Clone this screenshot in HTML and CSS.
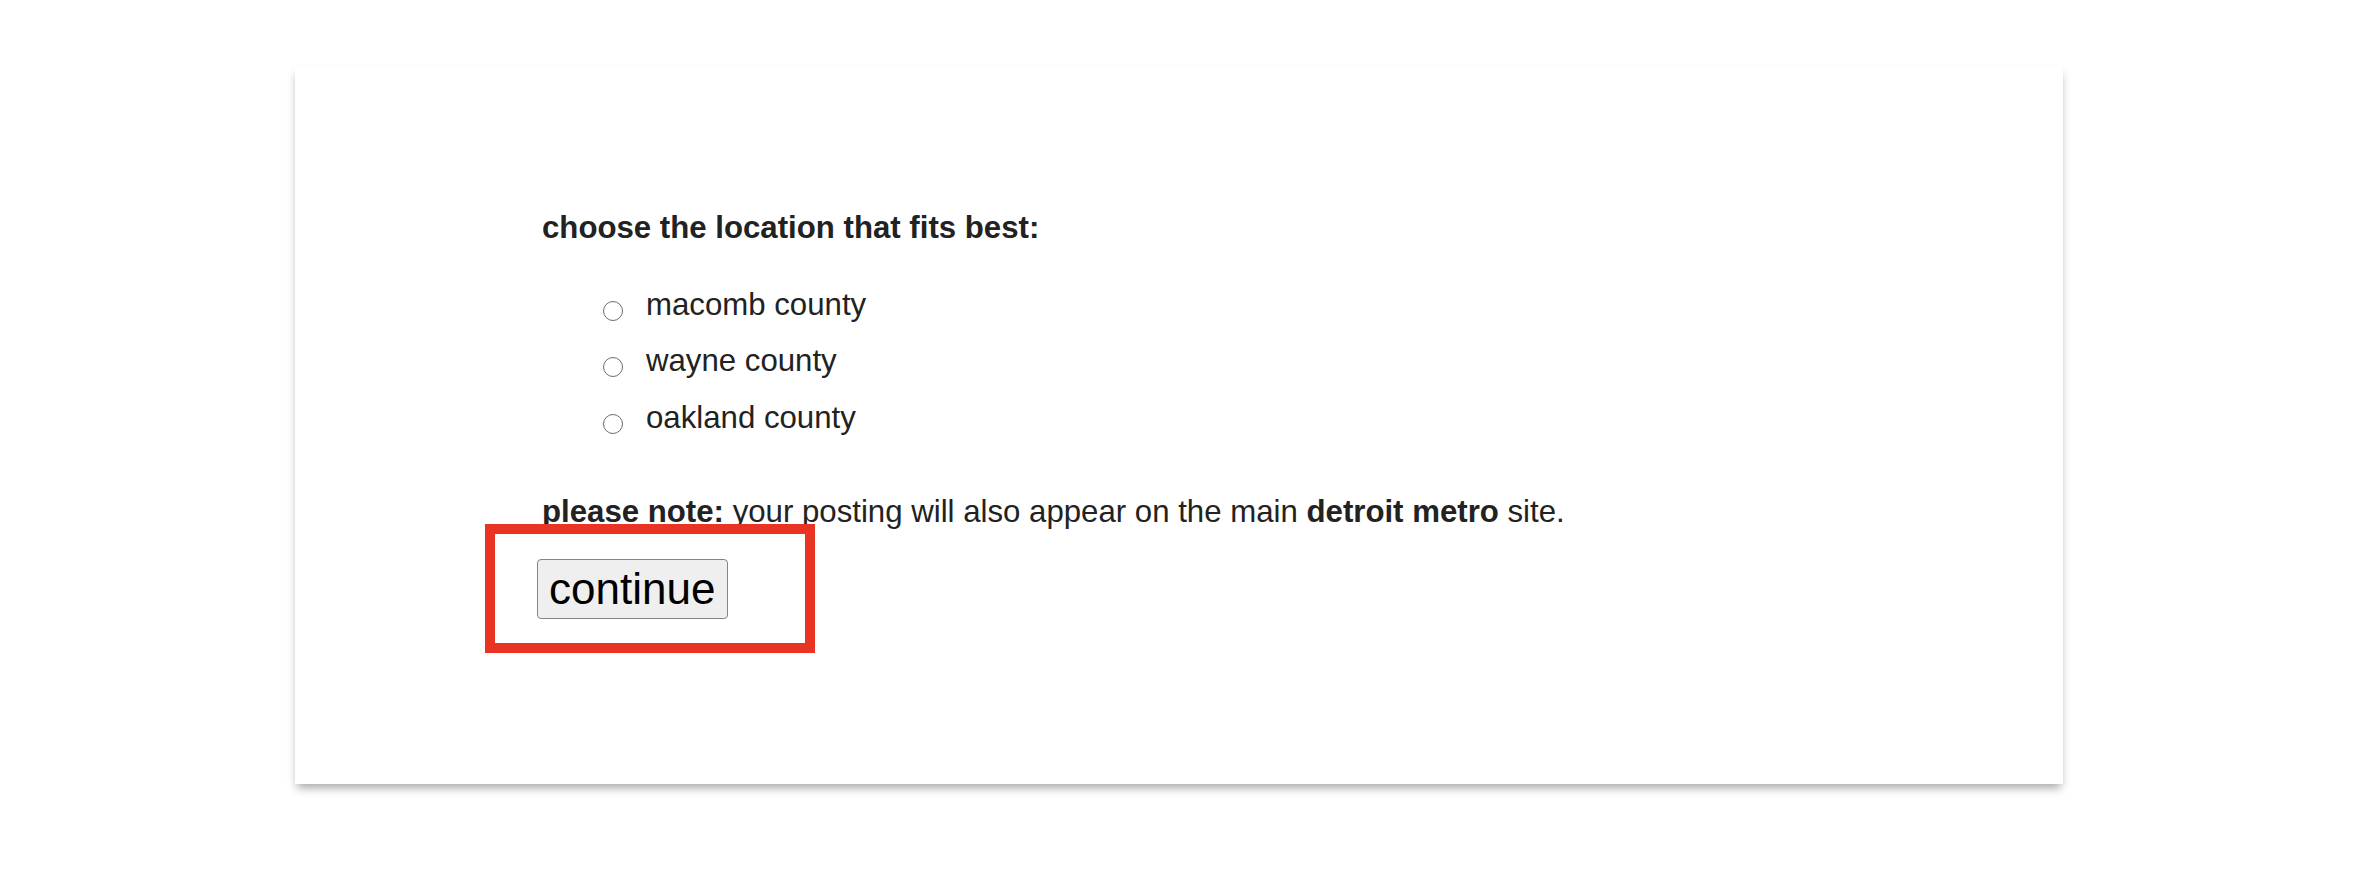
FILE: index.html
```html
<!DOCTYPE html>
<html lang="en">
<head>
<meta charset="utf-8">
<title>choose location</title>
<link rel="stylesheet" href="styles.css">
</head>
<body>
<div class="page">
  <div class="card">
    <form class="form">
      <p class="heading">choose the location that fits best:</p>
      <div class="options">
        <label class="option"><input class="radio" type="radio" name="loc"><span class="opt-text">macomb county</span></label>
        <label class="option"><input class="radio" type="radio" name="loc"><span class="opt-text">wayne county</span></label>
        <label class="option"><input class="radio" type="radio" name="loc"><span class="opt-text">oakland county</span></label>
      </div>
      <p class="note"><b>please note:</b> your posting will also appear on the main <b>detroit metro</b> site.</p>
      <button class="continue" type="button">continue</button>
    </form>
    <div class="highlight"></div>
  </div>
</div>
</body>
</html>
```

FILE: styles.css
```css
html, body {
  margin: 0;
  padding: 0;
  background: #ffffff;
}

body {
  font-family: "Liberation Sans", Arial, sans-serif;
  color: #222222;
}

.page {
  min-height: 886px;
  padding: 66px 0 40px 295px;
  box-sizing: border-box;
}

.card {
  position: relative;
  box-sizing: border-box;
  width: 1768px;
  height: 718px;
  padding: 144px 0 0 247px;
  background: #ffffff;
  box-shadow: 0 6px 9px -2px rgba(0, 0, 0, 0.34);
}

.form {
  display: flex;
  flex-direction: column;
  align-items: flex-start;
}

.heading {
  margin: 0;
  font-size: 31.2px;
  line-height: 36px;
  font-weight: bold;
}

.options {
  display: flex;
  flex-direction: column;
  margin-top: 30.5px;
  padding-left: 61px;
}

.option {
  display: flex;
  align-items: center;
  height: 56.5px;
  font-size: 31.2px;
  line-height: 56.5px;
}

.radio {
  appearance: none;
  -webkit-appearance: none;
  box-sizing: border-box;
  width: 20px;
  height: 20px;
  margin: 12px 23px 0 0;
  border: 1.6px solid #6c6c6c;
  border-radius: 50%;
  background: #ffffff;
  flex: none;
}

.note {
  margin: 48px 0 0 0;
  font-size: 31.2px;
  line-height: 36px;
}

.note b {
  font-weight: bold;
}

.continue {
  box-sizing: border-box;
  height: 60px;
  margin-top: 29px;
  margin-left: -5px;
  padding: 0 12px 0 11px;
  font-family: "Liberation Sans", Arial, sans-serif;
  font-size: 44px;
  line-height: 50px;
  color: #000000;
  background: #efefef;
  border: 1.5px solid #858585;
  border-radius: 4px;
}

.highlight {
  position: absolute;
  left: 190px;
  top: 458px;
  width: 330px;
  height: 129px;
  box-sizing: border-box;
  border: 10px solid #e93323;
}
```
